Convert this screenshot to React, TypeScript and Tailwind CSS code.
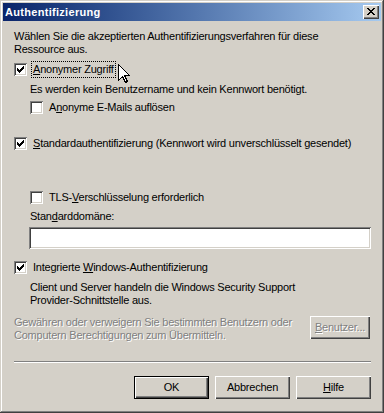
import type { ReactNode } from 'react';

// Classic Windows dialog: "Authentifizierung"

function CheckBox({ checked }: { checked?: boolean }) {
  return (
    <span className="relative block w-[13px] h-[13px] shrink-0 bg-white shadow-[inset_1px_1px_#808080,inset_-1px_-1px_#ffffff,inset_2px_2px_#404040,inset_-2px_-2px_#d4d0c8]">
      {checked && (
        <svg width="13" height="13" viewBox="0 0 13 13" className="absolute left-0 top-0" shapeRendering="crispEdges">
          <rect x="3" y="5" width="1" height="3" fill="#000" />
          <rect x="4" y="6" width="1" height="3" fill="#000" />
          <rect x="5" y="7" width="1" height="3" fill="#000" />
          <rect x="6" y="6" width="1" height="3" fill="#000" />
          <rect x="7" y="5" width="1" height="3" fill="#000" />
          <rect x="8" y="4" width="1" height="3" fill="#000" />
          <rect x="9" y="3" width="1" height="3" fill="#000" />
        </svg>
      )}
    </span>
  );
}

function CheckRow({
  checked,
  focused,
  indent,
  children,
  className,
}: {
  checked?: boolean;
  focused?: boolean;
  indent?: boolean;
  children: ReactNode;
  className?: string;
}) {
  return (
    <div className={`flex items-center h-[17px] ${indent ? 'pl-[16px]' : ''} ${className ?? ''}`}>
      <CheckBox checked={checked} />
      <span
        className={`ml-[4px] pl-[1px] pr-[1px] py-[1px] border ${
          focused ? 'border-dotted border-black' : 'border-transparent'
        } whitespace-nowrap`}
      >
        {children}
      </span>
    </div>
  );
}

function Button({
  children,
  isDefault,
  disabled,
  className,
}: {
  children: ReactNode;
  isDefault?: boolean;
  disabled?: boolean;
  className?: string;
}) {
  return (
    <div
      className={`flex items-center justify-center h-[23px] bg-[#d4d0c8] ${
        isDefault
          ? 'border border-black shadow-[inset_1px_1px_#ffffff,inset_-1px_-1px_#404040,inset_-2px_-2px_#808080]'
          : 'shadow-[inset_1px_1px_#ffffff,inset_-1px_-1px_#404040,inset_-2px_-2px_#808080]'
      } ${disabled ? 'text-[#808080] [text-shadow:1px_1px_0_#ffffff]' : 'text-black'} ${className ?? ''}`}
    >
      {children}
    </div>
  );
}

function CloseButton() {
  const rows = ['##....##', '.##..##.', '..####..', '...##...', '..####..', '.##..##.', '##....##'];
  return (
    <div className="relative w-[16px] h-[14px] bg-[#d4d0c8] shadow-[inset_1px_1px_#ffffff,inset_-1px_-1px_#404040,inset_-2px_-2px_#808080]">
      <svg width="16" height="14" viewBox="0 0 16 14" className="absolute left-0 top-0" shapeRendering="crispEdges">
        {rows.map((r, y) =>
          r.split('').map((c, x) =>
            c === '#' ? <rect key={`${x}-${y}`} x={4 + x} y={3 + y} width="1" height="1" fill="#000" /> : null,
          ),
        )}
      </svg>
    </div>
  );
}

function Cursor() {
  return (
    <svg
      width="13"
      height="20"
      viewBox="0 0 13 20"
      className="absolute left-[118px] top-[64px]"
      shapeRendering="crispEdges"
    >
      <path
        d="M0.5 0.5 L0.5 16.5 L4.5 12.5 L7.5 18.5 L9.5 17.5 L6.5 11.5 L11.5 11.5 Z"
        fill="#ffffff"
        stroke="#000000"
        strokeWidth="1"
      />
    </svg>
  );
}

export default function App() {
  return (
    <div className="relative w-[384px] h-[413px] p-[3px] flex flex-col bg-[#d4d0c8] shadow-[inset_-1px_-1px_#404040,inset_1px_1px_#d4d0c8,inset_-2px_-2px_#808080,inset_2px_2px_#ffffff] text-[11px] leading-[13px] text-black font-['Liberation_Sans',Arial,sans-serif] select-none">
      {/* title bar */}
      <div className="flex items-center justify-between h-[18px] pl-[2px] pr-[2px] bg-linear-to-r from-[#0a246a] to-[#a6caf0]">
        <span className="font-bold text-white tracking-[0.3px]">Authentifizierung</span>
        <CloseButton />
      </div>

      <div className="flex flex-col pl-[11px] pr-[10px] tracking-[-0.22px]">
        <p className="mt-[9px]">
          Wählen Sie die akzeptierten Authentifizierungsverfahren für diese
          <br />
          Ressource aus.
        </p>

        <CheckRow checked focused className="mt-[5px]">
          <u>A</u>nonymer Zugriff
        </CheckRow>

        <p className="mt-[5px] pl-[16px]">Es werden kein Benutzername und kein Kennwort benötigt.</p>

        <CheckRow indent className="mt-[3px]">
          A<u>n</u>onyme E-Mails auflösen
        </CheckRow>

        <CheckRow checked className="mt-[19px]">
          <u>S</u>tandardauthentifizierung (Kennwort wird unverschlüsselt gesendet)
        </CheckRow>

        <CheckRow indent className="mt-[37px]">
          TLS-<u>V</u>erschlüsselung erforderlich
        </CheckRow>

        <p className="mt-[4px] pl-[16px]">
          Stan<u>d</u>arddomäne:
        </p>

        <div className="mt-[4px] ml-[15px] h-[22px] bg-white shadow-[inset_1px_1px_#808080,inset_-1px_-1px_#ffffff,inset_2px_2px_#404040,inset_-2px_-2px_#d4d0c8]" />

        <CheckRow checked className="mt-[10px]">
          Integrierte <u>W</u>indows-Authentifizierung
        </CheckRow>

        <p className="mt-[5px] pl-[16px]">
          Client und Server handeln die Windows Security Support
          <br />
          Provider-Schnittstelle aus.
        </p>

        <div className="mt-[9px] flex items-start justify-between">
          <p className="text-[#808080] [text-shadow:1px_1px_0_#ffffff]">
            Gewähren oder verweigern Sie bestimmten Benutzern oder
            <br />
            Computern Berechtigungen zum Übermitteln.
          </p>
          <Button disabled className="w-[60px] mr-[1px]">
            <span>
              <u>B</u>enutzer...
            </span>
          </Button>
        </div>

        <div className="mt-[19px] h-[2px] border-t border-t-[#808080] border-b border-b-white" />

        <div className="mt-[13px] flex justify-end gap-[6px]">
          <Button isDefault className="w-[75px]">
            OK
          </Button>
          <Button className="w-[75px]">Abbrechen</Button>
          <Button className="w-[75px]">
            <span>
              <u>H</u>ilfe
            </span>
          </Button>
        </div>
      </div>

      <Cursor />
    </div>
  );
}
